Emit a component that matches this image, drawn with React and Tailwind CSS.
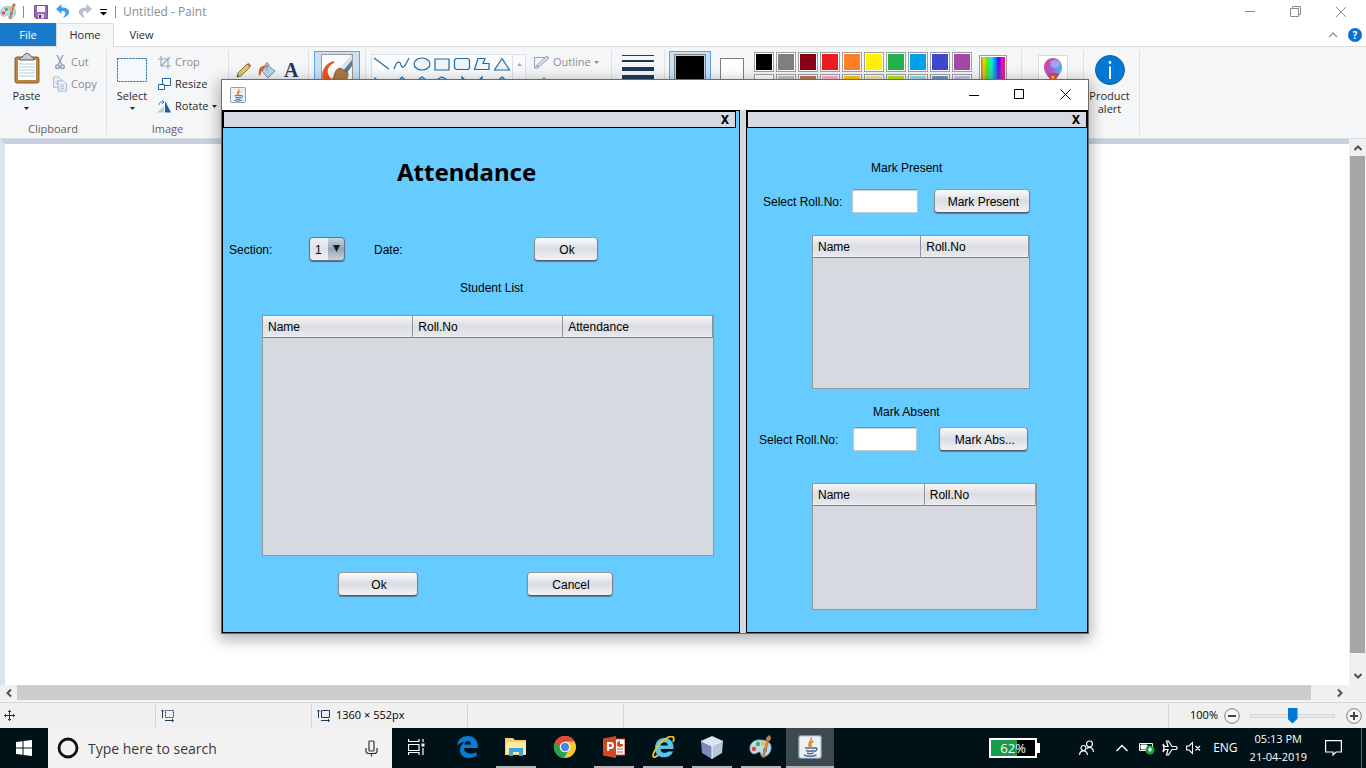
import React from "react";

const shapes = [
  "M2 3 L17 14",
  "M2 14 C5 5 8 6 9 10 C11 16 14 9 17 3",
  "M2 9 a8 6 0 1 0 16 0 a8 6 0 1 0 -16 0",
  "M3 4 H17 V15 H3 Z",
  "M5 3.5 H15 Q17.500 3.500 17.500 6 V12 Q17.500 14.500 15 14.500 H5 Q2.500 14.500 2.500 12 V6 Q2.500 3.500 5 3.500 Z",
  "M6 3.500 H13 L11 8.500 H17 V14.500 H2.500 Z",
  "M10 3.500 L17.500 15 H2.500 Z",
  "M3 3 V15 L16 15 Z",
  "M10 2 L17 9 L10 16 L3 9 Z",
  "M10 2 L17 7 L14 15 H6 L3 7 Z",
  "M10 2 L16 5 V12 L10 16 L4 12 V5 Z",
  "M3 7 H10 V2 L17 9 L10 16 V11 H3 Z",
  "M17 7 H10 V2 L3 9 L10 16 V11 H17 Z",
  "M10 2 L17 8 H13 V15 H7 V8 H3 Z",
];

const palette = [
  "bg-[#000000]", "bg-[#7f7f7f]", "bg-[#880015]", "bg-[#ed1c24]", "bg-[#ff7f27]",
  "bg-[#fff200]", "bg-[#22b14c]", "bg-[#00a2e8]", "bg-[#3f48cc]", "bg-[#a349a4]",
  "bg-[#ffffff]", "bg-[#c3c3c3]", "bg-[#b97a57]", "bg-[#ffaec9]", "bg-[#ffc90e]",
  "bg-[#efe4b0]", "bg-[#b5e61d]", "bg-[#99d9ea]", "bg-[#7092be]", "bg-[#c8bfe7]",
];

function Caret({ className = "" }) {
  return (
    <svg className={className} width="5" height="3" viewBox="0 0 5 3" fill="currentColor" aria-hidden="true">
      <path d="M0 0 H5 L2.500 3 Z" />
    </svg>
  );
}

function Chevron({ turn = "", className = "text-[#505050]" }) {
  return (
    <svg className={`${className} ${turn}`} width="10" height="10" viewBox="0 0 10 10" fill="none" stroke="currentColor" strokeWidth="2" aria-hidden="true">
      <path d="M1.500 7 L5 3.500 L8.500 7" />
    </svg>
  );
}

function PaintIcon({ size }) {
  return (
    <svg width={size} height={size} viewBox="0 0 24 24" aria-hidden="true">
      <path d="M12 5 C5 4 0 9 1 15 C2 20 7 19 8 18 C10 16 12 17 12 20 C13 24 21 21 22 14 C23 8 18 5 12 5 Z" fill="#b9dcee" stroke="#6e9db8" strokeWidth=".8" />
      <circle cx="5" cy="14" r="2.200" fill="#e8432e" />
      <circle cx="9" cy="9" r="2.200" fill="#4fb04a" />
      <circle cx="14" cy="8.500" r="2" fill="#f3b62e" />
      <circle cx="16" cy="15" r="2" fill="#2f76c4" />
      <path d="M20 5 L15 23 L13 22 L18 5 Z" fill="#e08a37" stroke="#a95c1c" strokeWidth=".5" />
      <path d="M17 5 C16 2 19 2 20 0 C22 1 23 4 20.500 6 Z" fill="#b98052" />
    </svg>
  );
}

function JavaIcon({ size }) {
  return (
    <svg width={size} height={size} viewBox="0 0 24 24" aria-hidden="true">
      <rect x=".7" y=".7" width="22.600" height="22.600" rx="2" fill="#eef1f4" stroke="#7890a4" strokeWidth="1.300" />
      <path d="M13 2.500 C15 6 9 7 11.500 12 M15.500 6 C12 8 12 9 13.500 12" fill="none" stroke="#ee7f22" strokeWidth="1.600" />
      <path d="M7 13 H16.500 M16.500 13 C20.500 12 19 16.500 15.500 16.500 M8 15.500 Q12 17 16 15.500 M9 18 Q12 19.500 15.500 18 M6 20 Q12 22.500 18.500 20" fill="none" stroke="#496f94" strokeWidth="1.500" />
    </svg>
  );
}

function Sep() {
  return <div className="my-[3px] w-px shrink-0 bg-[#dfe1e4]" />;
}

function TitleBar() {
  return (
    <header className="flex h-[23px] items-center text-[11px] text-[#8d8d8d]">
      <PaintIcon size={17} />
      <span className="ml-1.5 h-3 w-px bg-[#8d8d8d]" />
      <button aria-label="Save" className="ml-2.5">
        <svg width="14" height="14" viewBox="0 0 14 14">
          <path d="M.5.5 H13.500 V13.500 H2 L.5 12 Z" fill="#9a6cb8" stroke="#7a4d9b" />
          <path d="M3 1 H11 V7 H3 Z" fill="#faf8fc" />
          <path d="M4 9 H10 V13.500 H4 Z" fill="#cfd3d9" />
          <path d="M5 10 H7 V13 H5 Z" fill="#52366a" />
        </svg>
      </button>
      <button aria-label="Undo" className="ml-2">
        <svg width="14" height="15" viewBox="0 0 14 15">
          <path d="M5.500 0 L0 5 L5.500 10 V7 C10 6.500 10.500 10 6.500 14 C15 12 16 3.500 5.500 3.500 Z" fill="#439ee8" />
        </svg>
      </button>
      <button aria-label="Redo" className="ml-2">
        <svg width="14" height="15" viewBox="0 0 14 15">
          <path d="M8.500 0 L14 5 L8.500 10 V7 C4 6.500 3.500 10 7.500 14 C-1 12 -2 3.500 8.500 3.500 Z" fill="#b4c0ce" />
        </svg>
      </button>
      <button aria-label="Customize toolbar" className="ml-2 text-black">
        <svg width="7" height="8" viewBox="0 0 7 8" fill="currentColor">
          <path d="M0 1 H7 V2 H0 Z M0 4 H7 L3.500 7.500 Z" />
        </svg>
      </button>
      <span className="ml-2 h-3 w-px bg-[#8d8d8d]" />
      <h1 className="ml-[7px] text-[12px]">Untitled - Paint</h1>
      <div className="mr-5 ml-auto flex items-center gap-[35px]">
        <button aria-label="Minimize">
          <svg width="10" height="10"><path d="M0 4.500 H10" stroke="#8b8b8b" /></svg>
        </button>
        <button aria-label="Restore">
          <svg width="11" height="11" fill="none" stroke="#8b8b8b"><path d="M.5 2.500 H8.500 V10.500 H.5 Z M2.500 2.500 V.5 H10.500 V8.500 H8.500" /></svg>
        </button>
        <button aria-label="Close">
          <svg width="10" height="10" stroke="#8b8b8b"><path d="M0 0 L10 10 M10 0 L0 10" /></svg>
        </button>
      </div>
    </header>
  );
}

function Tabs() {
  return (
    <nav className="flex h-6 items-stretch border-b border-[#dadbdc] text-[11px] text-[#2b2b2b]">
      <button className="w-14 bg-[#1979ca] pt-0.5 text-white">File</button>
      <button className="-mb-px w-[58px] border-x border-t border-[#dadbdc] bg-[#f5f6f7]">Home</button>
      <button className="w-[55px] pt-0.5">View</button>
      <div className="mr-1 ml-auto flex items-center gap-2.5">
        <button aria-label="Collapse ribbon">
          <svg width="10" height="10" fill="none" stroke="#9a9a9a" strokeWidth="1.500"><path d="M1 7 L5 3 L9 7" /></svg>
        </button>
        <button aria-label="Help" className="h-3.5 w-3.5 rounded-full bg-[#0f6fd0] text-[10px] leading-[14px] font-bold text-white">?</button>
      </div>
    </nav>
  );
}

function SmallTool({ icon, children, muted, caret }) {
  return (
    <button className={`flex h-[22px] items-center gap-1 ${muted ? "text-[#8d8d8d]" : "text-[#2b2b2b]"}`}>
      <span className="flex w-3.5 justify-center">{icon}</span>
      {children}
      {caret && <Caret className="-ml-px" />}
    </button>
  );
}

function Ribbon() {
  return (
    <section className="flex h-[92px] items-stretch overflow-hidden border-b border-[#dadbdc] bg-[#f5f6f8] text-[11px] leading-4 text-[#2b2b2b]">
      <div className="flex w-[106px] shrink-0 flex-col">
        <div className="flex flex-1 pt-1">
          <button className="flex w-[53px] flex-col items-center">
            <svg width="26" height="37" viewBox="0 0 26 37">
              <rect x="1" y="6" width="24" height="26" rx="2" fill="#b98445" stroke="#8e5f29" />
              <path d="M4 9 H22 V29 H4 Z" fill="#fdfefe" />
              <path d="M5 13 H21 M5 16 H21 M5 19 H21 M5 22 H21 M5 25 H21" stroke="#b4cde0" />
              <path d="M6 9 C6 5 9 7 10 4 C11 2 15 2 16 4 C17 7 20 5 20 9 Z" fill="#c8ccd0" stroke="#565a60" />
            </svg>
            <span>Paste</span>
            <Caret className="mt-[3px]" />
          </button>
          <div className="flex flex-col">
            <SmallTool muted icon={
              <svg width="10" height="15" viewBox="0 0 10 15" fill="none" stroke="#8fa3bd" strokeWidth="1.500">
                <path d="M2 0 L7 10 M8 0 L3 10" /><circle cx="2.500" cy="11.800" r="1.800" /><circle cx="7.500" cy="11.800" r="1.800" />
              </svg>}>Cut</SmallTool>
            <SmallTool muted icon={
              <svg width="15" height="16" viewBox="0 0 15 16" fill="#eef2f8" stroke="#a4b4cb">
                <path d="M.5.5 H6 L9 3.500 V11.500 H.5 Z M2.500 5 H6 M2.500 7.500 H6" /><path d="M5.500 4.500 H11 L14.500 8 V15.500 H5.500 Z" /><path d="M7.500 9 H12 M7.500 11 H12 M7.500 13 H12" />
              </svg>}>Copy</SmallTool>
          </div>
        </div>
        <div className="mb-px text-center text-[#5f5f5f]">Clipboard</div>
      </div>
      <Sep />
      <div className="flex w-[121px] shrink-0 flex-col">
        <div className="flex flex-1 pt-1">
          <button className="flex w-[50px] flex-col items-center">
            <svg width="30" height="37" viewBox="0 0 30 37"><rect x=".5" y="7.500" width="29" height="23" fill="#f5f9fd" stroke="#1762a8" strokeDasharray="2 1" /></svg>
            <span>Select</span>
            <Caret className="mt-[3px]" />
          </button>
          <div className="flex flex-col">
            <SmallTool muted icon={
              <svg width="13" height="13" viewBox="0 0 13 13" fill="none" stroke="#96a8bf" strokeWidth="1.200"><path d="M3 0 V10 H13 M0 3 H10 V13 M3 10 L12 1" /></svg>}>Crop</SmallTool>
            <SmallTool icon={
              <svg width="13" height="12" viewBox="0 0 13 12" fill="#fff" stroke="#1762a8"><path d="M4.500.5 H12.500 V7.500 H4.500 Z" /><path d="M.5 6.500 H6.500 V11.500 H.5 Z" /></svg>}>Resize</SmallTool>
            <SmallTool caret icon={
              <svg width="14" height="13" viewBox="0 0 14 13"><path d="M0 12.500 H7 V6 Z" fill="#c0c8d0" /><path d="M8 1 V12.500 H14 Z" fill="#1762a8" /><path d="M2 5 C2 2 4 2 6 2 M5 0 L7 2 L5 4" fill="none" stroke="#2f83cc" /></svg>}>Rotate</SmallTool>
          </div>
        </div>
        <div className="mb-px text-center text-[#5f5f5f]">Image</div>
      </div>
      <Sep />
      <div className="flex w-[79px] shrink-0 items-start gap-1.5 px-[7px] pt-[15px]">
        <button aria-label="Pencil">
          <svg width="16" height="17" viewBox="0 0 16 17">
            <path d="M1 15 L2 11 L11 2 L14 5 L5 14 Z" fill="#eac55a" stroke="#6b5937" strokeWidth=".8" />
            <path d="M11 2 L12.500.8 L15.200 3.500 L14 5 Z" fill="#d4616b" /><path d="M1 15 L2 13 L3 14 Z" fill="#222" />
          </svg>
        </button>
        <button aria-label="Fill">
          <svg width="18" height="17" viewBox="0 0 18 17">
            <path d="M9 3 L17 9 L10 16 L4 9 Z" fill="#bdd7ee" stroke="#6793bd" /><path d="M9 9 V1 M7 4 C7 0 11 0 11 4" fill="none" stroke="#7d8790" />
            <path d="M8 4 C2 3 0 7 1 14 C4 13 2 9 5 8 Z" fill="#e45f2b" />
          </svg>
        </button>
        <button aria-label="Text" className="pl-0.5 font-['Liberation_Serif',serif] text-[20px] leading-[17px] font-bold text-[#1e395b]">A</button>
      </div>
      <Sep />
      <div className="flex w-14 shrink-0 justify-center pt-1">
        <button aria-label="Brushes" className="flex h-20 w-[46px] justify-center border border-[#62a2e4] bg-[#c9e0f7] pt-0.5">
          <svg width="32" height="40" viewBox="0 0 32 40">
            <rect x=".5" y=".5" width="31" height="39" fill="#fbfbfb" stroke="#9b9b9b" />
            <path d="M13 7 C4 9 -1 18 2 27 L15 27 C6 24 3 14 13 9 Z" fill="#e75a26" />
            <path d="M31 1 L19 15 L26 19 L31 12 Z" fill="#5d7898" /><path d="M31 1 L19 15 L22 17 L31 6 Z" fill="#dbe6f0" />
            <path d="M19 14 C12 16 15 22 10 27 L24 27 C27 24 28 20 26 18 Z" fill="#b07a3d" stroke="#6e4720" strokeWidth=".7" />
          </svg>
        </button>
      </div>
      <Sep />
      <div className="flex w-[245px] shrink-0 items-start pt-[7px] pl-[5px]">
        <div className="flex h-20 w-[155px] border border-[#dcdfe3] bg-[#fafbfc]">
          <div className="grid grid-cols-7 content-start gap-y-0.5">
            {shapes.map((d, i) => (
              <svg key={i} width="20" height="18" viewBox="0 0 20 18" fill="#eef5fb" stroke="#1f6aab" strokeWidth="1.200">
                <path d={d} fill={i < 2 ? "none" : undefined} />
              </svg>
            ))}
          </div>
          <div className="ml-auto flex h-full w-[13px] justify-center border-l border-[#dcdfe3] pt-2 text-[#a3a9b3]">
            <Caret className="rotate-180" />
          </div>
        </div>
        <div className="ml-2 flex flex-col text-[#8d8d8d]">
          <button className="flex h-4 items-center gap-[3px]">
            <svg width="16" height="14" viewBox="0 0 16 14"><path d="M.5 2.500 H11 M.5 2.500 V13 H5 M1 13 L3 10" fill="none" stroke="#8fa5c1" /><path d="M3 12 L4 9 L13 1 L15 3 L6 11 Z" fill="#d6e0ec" stroke="#8fa5c1" /></svg>
            Outline
            <Caret />
          </button>
          <svg className="mt-1.5" width="16" height="14" viewBox="0 0 16 14"><path d="M3 12 L4 8 L10 1 L12 3 L6 10 Z" fill="#b9c8da" stroke="#8fa5c1" /></svg>
        </div>
      </div>
      <Sep />
      <div className="flex w-[52px] shrink-0 flex-col items-center gap-1 pt-2">
        <div className="h-px w-8 bg-[#1e395b]" />
        <div className="h-0.5 w-8 bg-[#1e395b]" />
        <div className="mt-px h-1 w-8 bg-[#1e395b]" />
        <div className="h-1.5 w-8 bg-[#1e395b]" />
      </div>
      <Sep />
      <div className="flex w-[356px] shrink-0 items-start pt-1 pl-1">
        <button aria-label="Color 1" className="flex h-20 w-[42px] justify-center border border-[#62a2e4] bg-[#c9e0f7] pt-0.5">
          <span className="h-8 w-8 border border-[#7f7f7f] bg-black outline-1 -outline-offset-2 outline-[#b9d4ee]" />
        </button>
        <button aria-label="Color 2" className="mt-[7px] ml-[9px] h-6 w-6 border border-[#7f7f7f] bg-white" />
        <div className="ml-[10px] grid grid-cols-10 gap-0.5 pt-px">
          {palette.map((c) => (
            <button key={c} aria-label="Swatch" className={`h-5 w-5 border border-[#a0a0a0] shadow-[inset_0_0_0_1px_#fff] ${c}`} />
          ))}
        </div>
        <button aria-label="Edit colors" className="mt-1 ml-[7px] h-8 w-[28px] border border-[#a0a0a0] bg-[linear-gradient(to_bottom,transparent,#80808077),linear-gradient(to_right,#f20,#fd0,#3f0,#0fd,#09f,#40f,#f0c,#f02)] shadow-[inset_0_0_0_1px_#fff]" />
      </div>
      <Sep />
      <div className="flex w-[61px] shrink-0 justify-center pt-2">
        <button aria-label="Edit with Paint 3D" className="flex h-9 w-[30px] justify-center border border-[#dcdcdc] bg-white pt-0.5">
          <svg width="20" height="27" viewBox="0 0 20 27">
            <defs>
              <linearGradient id="pin" x1="0" y1="0" x2="1" y2="1"><stop offset="0" stopColor="#ef3b6f" /><stop offset=".4" stopColor="#ae5bd8" /><stop offset=".7" stopColor="#48b8ed" /><stop offset="1" stopColor="#2479dc" /></linearGradient>
            </defs>
            <path d="M10 0 C15 0 19 4 19 9 C19 16 14 18 10 26 C6 18 1 16 1 9 C1 4 5 0 10 0 Z" fill="url(#pin)" />
            <path d="M4 16 Q10 13 16 16 L10 26 Z" fill="#ea3c58" /><path d="M8 18 L12 18 L10 24 Z" fill="#f6bb38" />
            <ellipse cx="12" cy="6" rx="5" ry="4" fill="#8de2f6" opacity=".55" />
          </svg>
        </button>
      </div>
      <Sep />
      <button className="flex w-[55px] shrink-0 flex-col items-center pt-2 pr-1 leading-[13px]">
        <svg width="30" height="32" viewBox="0 0 30 32"><circle cx="15" cy="15" r="14.500" fill="#0078d4" stroke="#10629f" /><path d="M15 11.500 V24" stroke="#fff" strokeWidth="2" /><circle cx="15" cy="7.500" r="1.400" fill="#fff" /></svg>
        <span className="pt-0.5">Product<br />alert</span>
      </button>
      <Sep />
    </section>
  );
}

function Canvas() {
  return (
    <main className="flex min-h-[546px] flex-1 flex-col bg-[#f0f0f0]">
      <div className="flex flex-1">
        <div className="flex flex-1 border-t-[5px] border-l-[5px] border-t-[#c7d1e2] border-l-[#d9e4f1] bg-white" />
        <div className="ml-px flex w-[15px] flex-col items-center">
          <button aria-label="Scroll up" className="h-[17px]"><Chevron /></button>
          <div className="w-full flex-1 bg-[#a6a6a6]" />
          <button aria-label="Scroll down" className="flex h-8 items-end pb-1"><Chevron turn="rotate-180" /></button>
        </div>
        <div className="w-px" />
      </div>
      <div className="flex h-[17px] items-center border-b-2 border-[#f5f5f5]">
        <button aria-label="Scroll left" className="flex w-[17px] justify-center"><Chevron turn="-rotate-90" /></button>
        <div className="h-full flex-1 bg-[#cdcdcd]" />
        <button aria-label="Scroll right" className="flex w-[55px] pl-6"><Chevron turn="rotate-90" /></button>
      </div>
    </main>
  );
}

function StatusBar() {
  return (
    <footer className="flex h-[26px] items-center border-t border-[#d4d4d4] bg-[#f0f0f0] text-[11px] text-black">
      <div className="flex h-[22px] w-[156px] items-center border-r border-[#d4d4d4] pl-1">
        <svg width="11" height="11" fill="none" stroke="#1e395b"><path d="M5.500 0 V11 M0 5.500 H11 M4 2 L5.500.5 L7 2 M4 9 L5.500 10.500 L7 9 M2 4 L.5 5.500 L2 7 M9 4 L10.500 5.500 L9 7" /></svg>
      </div>
      <div className="flex h-[22px] w-[156px] items-center border-r border-[#d4d4d4] pl-[5px]">
        <svg width="14" height="13" fill="none" stroke="#1e395b"><path d="M4.500 1.500 H12.500 V8.500 H4.500 Z" strokeDasharray="2 1" /><path d="M1.500 9 V1 M0 2.500 L1.500 1 L3 2.500 M4 11.500 H12 M11 10 L12.500 11.500 L11 13" /></svg>
      </div>
      <div className="flex h-[22px] w-[156px] items-center gap-[5px] border-r border-[#d4d4d4] pl-[5px]">
        <svg width="14" height="13" fill="none" stroke="#1e395b"><path d="M4.500 1.500 H12.500 V8.500 H4.500 Z" fill="#e4effa" /><path d="M1.500 9 V1 M0 2.500 L1.500 1 L3 2.500 M4 11.500 H12 M11 10 L12.500 11.500 L11 13" /></svg>
        1360 × 552px
      </div>
      <div className="h-[22px] w-[156px] border-r border-[#d4d4d4]" />
      <div className="ml-auto flex h-[22px] items-center border-l border-[#d4d4d4] pr-1 pl-[21px]">
        <label htmlFor="zoom">100%</label>
        <button aria-label="Zoom out" className="ml-1.5">
          <svg width="16" height="16"><circle cx="8" cy="8" r="7.300" fill="#f5f5f5" stroke="#7c7c7c" /><path d="M4 8 H12" stroke="#444" strokeWidth="2" /></svg>
        </button>
        <input id="zoom" type="range" defaultValue="50" className="mr-[11px] ml-2.5 h-4 w-[85px] appearance-none bg-transparent [&::-webkit-slider-runnable-track]:h-1 [&::-webkit-slider-runnable-track]:border [&::-webkit-slider-runnable-track]:border-[#d6d6d6] [&::-webkit-slider-runnable-track]:bg-[#e7eaea] [&::-webkit-slider-thumb]:-mt-[7px] [&::-webkit-slider-thumb]:h-4 [&::-webkit-slider-thumb]:w-2.5 [&::-webkit-slider-thumb]:appearance-none [&::-webkit-slider-thumb]:bg-[#0078d7] [&::-webkit-slider-thumb]:[clip-path:polygon(0_0,100%_0,100%_70%,50%_100%,0_70%)]" />
        <button aria-label="Zoom in">
          <svg width="16" height="16"><circle cx="8" cy="8" r="7.300" fill="#f5f5f5" stroke="#7c7c7c" /><path d="M4 8 H12 M8 4 V12" stroke="#444" strokeWidth="2" /></svg>
        </button>
      </div>
    </footer>
  );
}

function Task({ label, running, active, children }) {
  return (
    <button aria-label={label} className={`flex w-12 items-center justify-center border-b-2 border-transparent ${active ? "bg-[#3c494d]" : ""} relative`}>
      {children}
      {running && <span className={`absolute -bottom-0.5 h-0.5 bg-[#b5b5b5] ${active ? "w-12" : "w-10"}`} />}
    </button>
  );
}

function Taskbar() {
  return (
    <nav className="flex h-10 items-stretch bg-[#001218] text-white">
      <button aria-label="Start" className="flex w-12 items-center justify-center">
        <svg width="16" height="16" fill="#fff"><path d="M0 2 L6.500 1.200 V7.500 H0 Z M7.500 1 L16 0 V7.500 H7.500 Z M0 8.500 H6.500 V14.800 L0 14 Z M7.500 8.500 H16 V16 L7.500 15 Z" /></svg>
      </button>
      <div className="flex w-[344px] items-center bg-[#f2f2f2] px-[9px]">
        <svg width="22" height="22" fill="none" stroke="#111" strokeWidth="2.800"><circle cx="11" cy="11" r="9" /></svg>
        <input aria-label="Search" placeholder="Type here to search" className="ml-[9px] min-w-0 flex-1 bg-transparent text-[14px] outline-none placeholder:text-[#3a3a3a]" />
        <svg className="mr-[5px]" width="13" height="17" fill="none" stroke="#333" strokeWidth="1.200"><rect x="4" y="1" width="5" height="10" rx="1" /><path d="M1 8 V11 Q1 13.500 4 13.500 H9 Q12 13.500 12 11 V8 M6.500 13.500 V16.500" /></svg>
      </div>
      <Task label="Task view">
        <svg width="17" height="16" fill="none" stroke="#fff" strokeWidth="1.200"><path d="M.5 0 V2.500 H11 V0 M.5 5.500 H11 V11.500 H.5 Z M.5 16 V13.500 H11 V16 M15 0 V3 M15 9 V16" /><path d="M13.500 4.500 H16.500 V7.500 H13.500 Z" fill="#fff" stroke="none" /></svg>
      </Task>
      <div className="ml-[3px] flex gap-px">
        <Task label="Edge">
          <svg width="21" height="22" viewBox="0 0 21 22" fill="#0b7bd8"><path d="M0 10 C1 3 5 0 11 0 C17 0 21 4 21 12 H7 C7 18 15 19 19.500 16 V20 C12 24 3 22 3 14 C3 10 6 7 8 6 C4 6 1.500 8 0 10 Z M7.500 8.500 H14 C14 3.500 7.500 4 7.500 8.500 Z" /></svg>
        </Task>
        <Task label="File Explorer" running>
          <svg width="22" height="20" viewBox="0 0 22 20"><path d="M0 1 H8 L10 3 H21 V18 H0 Z" fill="#f6d269" /><path d="M1 5 H21 V17 H1 Z" fill="#ffe9a0" /><path d="M4 19 V11 H18 V19 H14 V15 H8 V19 Z" fill="#36a9e1" /></svg>
        </Task>
        <Task label="Chrome">
          <svg width="22" height="22" viewBox="0 0 22 22"><circle cx="11" cy="11" r="11" fill="#fbc92b" /><path d="M11 11 L1.500 5.500 A11 11 0 0 0 10 22 L15.500 13 Z" fill="#24a451" /><path d="M11 11 L6.500 13.500 L1.500 5.500 A11 11 0 0 1 20.600 5.500 H11 Z" fill="#df4936" /><circle cx="11" cy="11" r="5.300" fill="#fff" /><circle cx="11" cy="11" r="4.200" fill="#4486ee" /></svg>
        </Task>
        <Task label="PowerPoint" running>
          <svg width="22" height="22" viewBox="0 0 22 22"><path d="M12 3 H22 V19 H12 Z" fill="#fff" stroke="#d24726" /><path d="M14 13 H20 M14 16 H20" stroke="#d24726" /><path d="M17 5 A3 3 0 1 0 20 8 H17 Z" fill="#d24726" /><path d="M0 2.500 L13 0 V22 L0 19.500 Z" fill="#d24726" /><path d="M5 15 V7 H7.500 Q10 7 10 9.500 Q10 12 7.500 12 H5" fill="none" stroke="#fff" strokeWidth="2" /></svg>
        </Task>
        <Task label="Internet Explorer" running>
          <svg width="23" height="23" viewBox="0 0 23 23"><path d="M12 2 C19 2 22 7 21.500 13 H8.500 C9 18 14.500 17.500 16 15.500 H21 C18 24 3 23.500 3 12.500 C3 6 7 2 12 2 Z M8.500 9.500 H16 C15.500 5 9 5 8.500 9.500 Z" fill="#58c4f2" /><path d="M6 19 C1 24 -1 20 4 13 C10 3 19 -1 21 1 C22 2 22 4 21 6" fill="none" stroke="#f2c51c" strokeWidth="1.800" /></svg>
        </Task>
        <Task label="NetBeans" running>
          <svg width="22" height="23" viewBox="0 0 22 23"><path d="M11 0 L22 5 L11 10 L0 5 Z" fill="#dbe6ee" /><path d="M0 5 L11 10 V23 L1 17 Z" fill="#7f89bd" /><path d="M22 5 L11 10 V23 L21 17 Z" fill="#b2c8dd" /><path d="M0 5 L11 10 L22 5 M11 10 V23" fill="none" stroke="#f1f7fb" /></svg>
        </Task>
        <Task label="Paint" running><PaintIcon size={24} /></Task>
        <Task label="Java" running active><JavaIcon size={24} /></Task>
      </div>
      <div className="ml-auto flex items-center text-[11px]">
        <div className="flex items-center">
          <div className="h-5 w-12 border-2 border-white bg-[linear-gradient(to_right,#169b48_60%,#000_60%)] text-center text-[13px] leading-4">62%</div>
          <div className="h-2.5 w-[3px] bg-white" />
        </div>
        <svg className="ml-[39px]" width="15" height="16" fill="none" stroke="#fff" strokeWidth="1.200"><circle cx="10.500" cy="4" r="3" /><circle cx="4.500" cy="8" r="2.500" /><path d="M.6 15 C.6 9.500 8.400 9.500 8.400 15 M8 8.500 C11 6 14.400 8 14.400 12" /></svg>
        <svg className="ml-[22px]" width="12" height="8" fill="none" stroke="#fff" strokeWidth="1.400"><path d="M.5 7 L6 1.500 L11.500 7" /></svg>
        <svg className="ml-[11px]" width="16" height="14" fill="none" stroke="#fff"><path d="M.5 2.500 H13.500 V9.500 H.5 Z" /><path d="M2 4 H8 V8 H2 Z" fill="#fff" /><circle cx="11" cy="9" r="4.500" fill="#15a33a" stroke="none" /><path d="M11 6 L13 8.500 L11 11 L9 8.500 Z M11 10 V13" fill="#fff" stroke="none" /></svg>
        <svg className="ml-[7px]" width="16" height="16" fill="none" stroke="#fff" strokeWidth="1.200"><path d="M1 4 L3 6.500 H6 L4.500 1 H6.500 L10 6.500 H14 Q16.500 8 14 9.500 H10 L6.500 15 H4.500 L6 9.500 H3 L1 12 L2 8 Z" /></svg>
        <svg className="ml-2" width="15" height="14" fill="none" stroke="#fff" strokeWidth="1.100"><path d="M.6 5 H3 L6.500 1.500 V12.500 L3 9 H.6 Z M9.500 5 L14 9.500 M14 5 L9.500 9.500" /></svg>
        <span className="ml-3 text-[12px]">ENG</span>
        <time className="ml-3 text-center text-[11px] leading-[18px]">05:13 PM<br />21-04-2019</time>
        <svg className="ml-[18px]" width="17" height="16" fill="none" stroke="#fff" strokeWidth="1.200"><path d="M.6.6 H16.400 V12 H11 L8 15 V12 H.6 Z" /></svg>
        <div className="mr-1 ml-[19px] h-10 w-px bg-[#58646a]" />
      </div>
    </nav>
  );
}

function PaneHeader({ className = "" }) {
  return (
    <div className={`flex h-[17px] items-center justify-end border border-black bg-[#d6d9df] pr-1.5 ${className}`}>
      <button aria-label="Close pane" className="font-['DejaVu_Sans_Condensed','DejaVu_Sans',sans-serif] text-[12px] leading-[14px] font-bold">X</button>
    </div>
  );
}

function JButton({ className, children }) {
  return (
    <button className={`h-6 rounded border border-t-[#989ba1] border-r-[#7c7f85] border-b-[#55585e] border-l-[#898c92] bg-linear-to-b from-[#fbfbfc] via-[#d9dce2] to-[#f1f3f8] pt-0.5 pl-0.5 shadow-[0_1px_1px_#55809a] ${className}`}>
      {children}
    </button>
  );
}

function JTable({ columns, className }) {
  return (
    <div className={`border border-[#92959b] bg-[#d6d9df] ${className}`}>
      <table className="w-full table-fixed border-collapse">
        <thead>
          <tr className="h-[21px] border-b border-[#7b7f88] bg-linear-to-b from-[#f6f6f8] via-[#dcdee3] to-[#e6e8ef]">
            {columns.map((c) => (
              <th key={c} className="border-r border-[#8f939a] pt-px pl-[5px] text-left font-normal">{c}</th>
            ))}
          </tr>
        </thead>
      </table>
    </div>
  );
}

function JavaWindow() {
  return (
    <div className="absolute top-[79px] left-[221px] w-[868px] border border-[#6b6b6b] bg-white font-['Liberation_Sans',Arial,sans-serif] text-[12px] leading-4 text-black shadow-[0_4px_14px_2px_rgba(0,0,0,0.3)]">
      <div className="flex h-[30px] items-center pr-[17px] pb-px pl-2">
        <JavaIcon size={16} />
        <div className="ml-auto flex items-center gap-[35px]">
          <button aria-label="Minimize window"><svg width="10" height="10" stroke="#000"><path d="M0 5.500 H10" /></svg></button>
          <button aria-label="Maximize window"><svg width="11" height="11" fill="none" stroke="#000"><path d="M.5.5 H9.500 V9.500 H.5 Z" /></svg></button>
          <button aria-label="Close window"><svg width="11" height="11" stroke="#000"><path d="M.5.5 L10.500 10.500 M10.500.5 L.5 10.500" /></svg></button>
        </div>
      </div>
      <div className="flex gap-1.5 bg-[#d6d9df]">
        <section className="w-[518px] border border-black bg-[#66ccff] pb-9">
          <PaneHeader className="mr-[3px]" />
          <h2 className="mt-7 pl-[174px] font-['Noto_Sans','Open_Sans',sans-serif] text-[24px] leading-8 font-bold">Attendance</h2>
          <div className="mt-[49px] flex h-6 items-center pl-1.5">
            <label htmlFor="section" className="w-20 pt-0.5">Section:</label>
            <div className="relative h-6 w-9">
              <select id="section" className="h-6 w-9 appearance-none rounded border border-[#66718a] bg-[linear-gradient(to_bottom,#fff8,#fff0_50%,#fff8),linear-gradient(to_right,#dde0e6_52%,#8ea5b8_52%)] pt-0.5 pl-[5px] text-[12px] shadow-[0_1px_1px_#3d6888]">
                <option>1</option>
              </select>
              <svg className="pointer-events-none absolute top-2 right-1" width="9" height="8"><path d="M1 0 H8 L4.500 7 Z" fill="#1a1a1a" /></svg>
            </div>
            <span className="ml-[29px] w-40 pt-0.5">Date:</span>
            <JButton className="w-16">Ok</JButton>
          </div>
          <h3 className="mt-[19px] pl-[237px]">Student List</h3>
          <JTable className="mt-[19px] ml-[39px] h-[241px] w-[452px]" columns={["Name", "Roll.No", "Attendance"]} />
          <div className="mt-4 flex pl-[115px]">
            <JButton className="w-20">Ok</JButton>
            <JButton className="ml-[109px] w-[86px]">Cancel</JButton>
          </div>
        </section>
        <section className="flex-1 border border-black bg-[#66ccff]">
          <PaneHeader />
          <h3 className="mt-8 pl-[124px]">Mark Present</h3>
          <div className="mt-[13px] flex h-6 items-center pl-4">
            <label htmlFor="present" className="pt-0.5">Select Roll.No:</label>
            <input id="present" className="ml-2.5 h-6 w-[66px] border border-[#c3c6cc] border-t-[#8d8e8f] bg-white px-1 shadow-[inset_0_1px_1px_#ccc]" />
            <JButton className="ml-4 w-24">Mark Present</JButton>
          </div>
          <JTable className="mt-[22px] ml-[65px] h-[154px] w-[218px]" columns={["Name", "Roll.No"]} />
          <h3 className="mt-[15px] pl-[126px]">Mark Absent</h3>
          <div className="mt-[7px] flex h-6 items-center pl-3">
            <label htmlFor="absent" className="pt-0.5">Select Roll.No:</label>
            <input id="absent" className="ml-[15px] h-6 w-16 border border-[#c3c6cc] border-t-[#8d8e8f] bg-white px-1 shadow-[inset_0_1px_1px_#ccc]" />
            <JButton className="ml-[22px] w-[89px]">Mark Abs...</JButton>
          </div>
          <JTable className="mt-8 ml-[65px] h-[127px] w-[225px]" columns={["Name", "Roll.No"]} />
        </section>
      </div>
    </div>
  );
}

export default function App() {
  return (
    <div className="relative flex min-h-screen flex-col bg-white font-['Open_Sans','Noto_Sans',sans-serif]">
      <TitleBar />
      <Tabs />
      <Ribbon />
      <Canvas />
      <StatusBar />
      <Taskbar />
      <JavaWindow />
    </div>
  );
}
